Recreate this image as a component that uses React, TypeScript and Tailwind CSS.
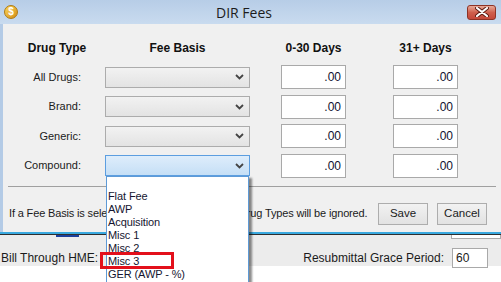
import React from "react";

const rows = [
  { label: "All Drugs:", active: false },
  { label: "Brand:", active: false },
  { label: "Generic:", active: false },
  { label: "Compound:", active: true },
];

const options = ["", "Flat Fee", "AWP", "Acquisition", "Misc 1", "Misc 2", "Misc 3", "GER (AWP - %)"];

function Chevron() {
  return (
    <svg width="9" height="6" viewBox="0 0 9 6" className="shrink-0">
      <polyline points="1,1 4.5,4.5 8,1" fill="none" stroke="#444" strokeWidth="1.8" />
    </svg>
  );
}

function Combo({ active }: { active: boolean }) {
  return (
    <div
      className={
        active
          ? "ml-[24px] flex h-[21px] w-[145px] items-center justify-end border border-[#5c9ee0] bg-gradient-to-b from-[#deedfb] to-[#c5dff6] pr-[5px]"
          : "ml-[24px] flex h-[21px] w-[145px] items-center justify-end border border-[#acacac] bg-gradient-to-b from-[#f2f2f2] to-[#e3e3e3] pr-[5px]"
      }
    >
      <Chevron />
    </div>
  );
}

function Field({ className }: { className: string }) {
  return (
    <div
      className={
        "flex h-[24px] w-[65px] items-center justify-end border border-[#a9a9a9] bg-white pr-[4px] text-[12px] text-[#101030] " +
        className
      }
    >
      .00
    </div>
  );
}

export default function App() {
  return (
    <div className="relative h-[282px] w-[501px] overflow-hidden bg-white font-['Liberation_Sans',Arial,sans-serif] text-[11px] text-[#1b1b1b]">
      {/* dialog window */}
      <div className="flex h-[234px] flex-col border-b-2 border-[#3aa9df]">
        <div className="flex h-[24px] items-center bg-gradient-to-b from-[#b7cde7] to-[#c9dbef]">
          <div className="ml-[4px] flex h-[14px] w-[14px] items-center justify-center rounded-full border border-[#b07a12] bg-gradient-to-br from-[#fbd85a] to-[#d38c0b] text-[10px] font-bold leading-none text-white">
            $
          </div>
          <div className="ml-[198px] font-['Open_Sans',sans-serif] text-[14px] text-[#1c1c1c]">DIR Fees</div>
          <div className="ml-auto mr-[5px] flex h-[15px] w-[29px] items-center justify-center rounded-[3px] border border-[#8e3326] bg-gradient-to-b from-[#e7a898] via-[#cf5f4d] to-[#c4473a]">
            <svg width="14" height="10" viewBox="0 0 14 10">
              <path d="M2 1 L12 9 M12 1 L2 9" stroke="#5a1a12" strokeWidth="4" strokeLinecap="round" />
              <path d="M2 1 L12 9 M12 1 L2 9" stroke="#ffffff" strokeWidth="2.2" strokeLinecap="round" />
            </svg>
          </div>
        </div>
        <div className="flex flex-1 flex-col border-l-[3px] border-[#b4cbe6] bg-[#f0f0f0]">
          <div className="mt-[17px] flex h-[14px] items-center text-[12px] font-bold text-[#111]">
            <div className="w-[108px] text-center">Drug Type</div>
            <div className="w-[133px] text-center">Fee Basis</div>
            <div className="ml-[37px] w-[65px] text-center">0-30 Days</div>
            <div className="ml-[47px] w-[65px] text-center">31+ Days</div>
          </div>
          <div className="mt-[10px] flex flex-col gap-[5.5px]">
            {rows.map((r) => (
              <div key={r.label} className="flex h-[24px] items-center">
                <div className="w-[78px] text-right">{r.label}</div>
                <Combo active={r.active} />
                <Field className="ml-[31px]" />
                <Field className="ml-[47px]" />
              </div>
            ))}
          </div>
          <div className="mx-[5px] mt-[8px] h-px bg-[#a0a0a0]" />
          <div className="mt-[16px] flex h-[22px] items-center pl-[6px] pr-[14px]">
            <span className="whitespace-nowrap tracking-[-0.15px]">
              If a Fee Basis is selected for All Drugs, the other Drug Types will be ignored.
            </span>
            <button className="ml-auto h-[22px] w-[50px] shrink-0 border border-[#adadad] bg-gradient-to-b from-[#f2f2f2] to-[#e2e2e2] text-[11.5px]">
              Save
            </button>
            <button className="ml-[9px] h-[22px] w-[50px] shrink-0 border border-[#adadad] bg-gradient-to-b from-[#f2f2f2] to-[#e2e2e2] text-[11.5px]">
              Cancel
            </button>
          </div>
        </div>
      </div>
      <div className="h-px bg-[#2e2e2e]" />

      {/* parent window behind */}
      <div className="flex h-[31px] flex-col bg-[#ececec]">
        <div className="flex h-[4px]">
          <div className="ml-[56px] h-[2px] w-[23px] bg-[#1c3f9c]" />
          <div className="ml-auto h-[4px] w-[50px] border-x border-b border-[#a9a9a9] bg-white" />
        </div>
        <div className="mt-[9px] flex h-[20px] items-center">
          <span className="ml-[1px] text-[12px]">Bill Through HME:</span>
          <div className="ml-[9px] h-[13px] w-[13px] border border-[#707070] bg-white" />
          <span className="ml-auto text-[12px]">Resubmittal Grace Period:</span>
          <div className="ml-[8px] mr-[13px] flex h-[20px] w-[36px] items-center border border-[#a9a9a9] bg-white pl-[3px] text-[12px]">
            60
          </div>
        </div>
      </div>

      {/* open dropdown list */}
      <div className="absolute left-[106px] top-[176px] h-[112px] w-[143px] border border-[#5e9ad6] bg-white shadow-[3px_2px_2px_rgba(0,0,0,0.45)]">
        {options.map((o, i) => (
          <div key={i} className="h-[13px] pl-[1px] text-[11px] leading-[13px] tracking-[-0.1px] text-[#151530]">
            {o}
          </div>
        ))}
      </div>

      {/* red highlight */}
      <div className="absolute left-[100px] top-[252px] h-[17px] w-[74px] border-[3px] border-[#e3101b]" />
    </div>
  );
}
